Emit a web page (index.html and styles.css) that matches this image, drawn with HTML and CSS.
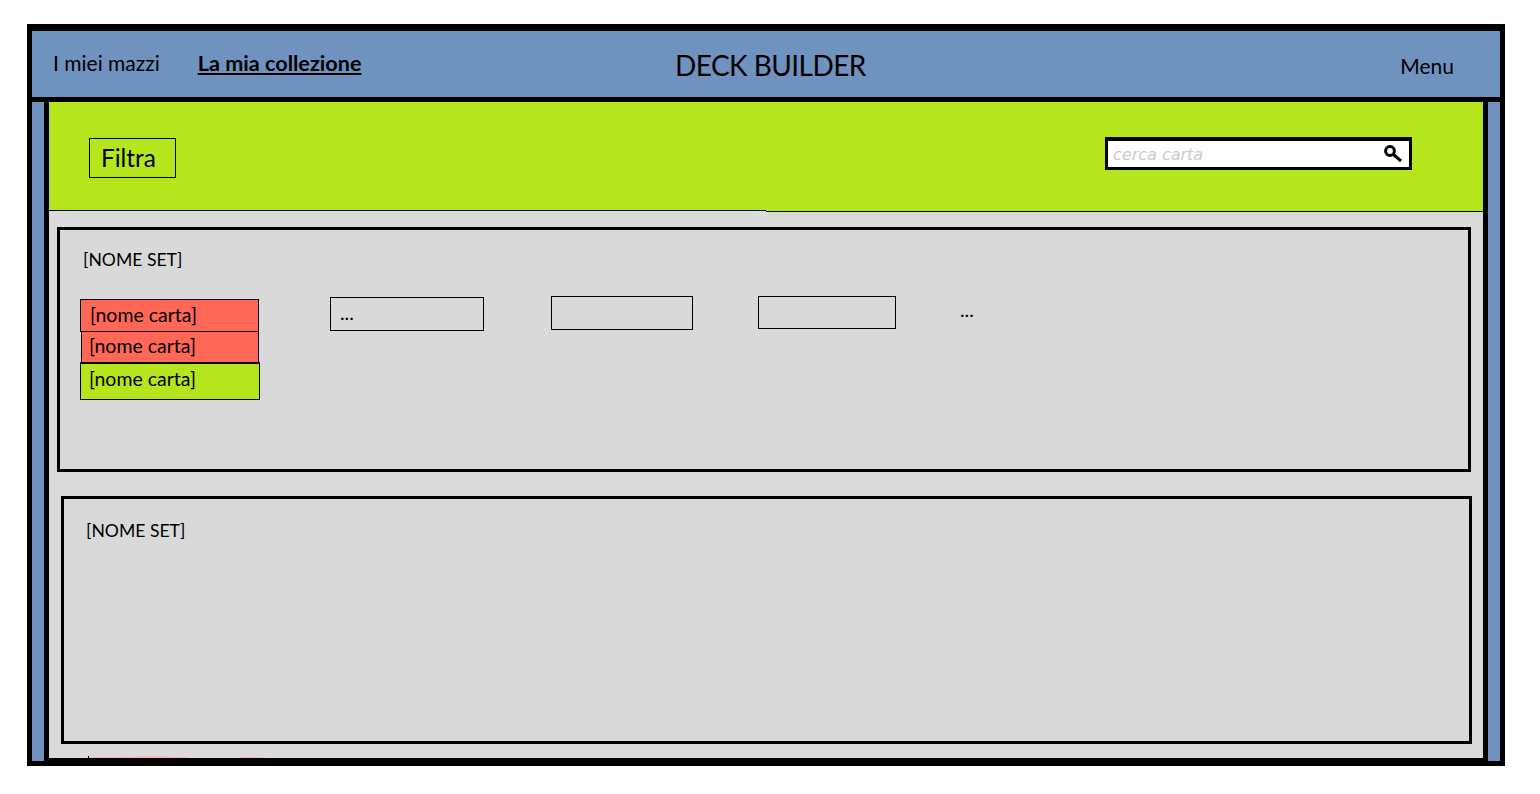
FILE: index.html
```html
<!DOCTYPE html>
<html lang="en">
<head>
  <meta charset="UTF-8">
  <meta name="viewport" content="width=device-width, initial-scale=1.0">
  <title>Deck Builder</title>
  <link rel="stylesheet" href="styles.css">
</head>
<body>
  <div class="frame">
    <header class="header">
      <nav class="nav">
        <a class="nav-link">I miei mazzi</a>
        <a class="nav-link current">La mia collezione</a>
      </nav>
      <h1 class="title">DECK BUILDER</h1>
      <a class="menu">Menu</a>
    </header>
    <main class="main">
      <div class="toolbar">
        <button class="filter">Filtra</button>
        <div class="search">
          <span class="search-text">cerca carta</span>
          <svg class="search-icon" width="20" height="20" viewBox="0 0 20 20">
            <circle cx="7" cy="7" r="4.4" fill="none" stroke="#000" stroke-width="3"/>
            <path d="M10.5 10.5 L18 17" stroke="#000" stroke-width="3" fill="none"/>
          </svg>
        </div>
      </div>

      <section class="set set-first">
        <h2 class="set-name">[NOME SET]</h2>
        <div class="cards">
          <div class="stack">
            <div class="card red red-top">[nome carta]</div>
            <div class="card red red-mid">[nome carta]</div>
            <div class="card lime">[nome carta]</div>
          </div>
          <div class="slot slot-a">...</div>
          <div class="slot slot-b"></div>
          <div class="slot slot-c"></div>
          <div class="more">...</div>
        </div>
      </section>

      <section class="set set-second">
        <h2 class="set-name">[NOME SET]</h2>
      </section>

      <div class="cutoff">
        <span class="tick"></span>
        <span class="pink pink-a"></span>
        <span class="pink pink-b"></span>
        <span class="pink pink-c"></span>
        <span class="pink pink-d"></span>
      </div>
    </main>
  </div>
</body>
</html>
```

FILE: styles.css
```css
body {
  margin: 0;
  background: #fff;
  font-family: 'Lato', 'Liberation Sans', sans-serif;
  color: #000;
}
.frame {
  box-sizing: border-box;
  width: 1478px;
  height: 742px;
  margin: 24px 0 0 27px;
  border: 5px solid #000;
  border-top-width: 7px;
  background: #6f92bf;
  display: flex;
  flex-direction: column;
}

/* Header */
.header {
  box-sizing: border-box;
  height: 71px;
  flex-shrink: 0;
  border-bottom: 5px solid #000;
  padding-left: 21px;
  display: flex;
  align-items: flex-start;
}
.nav {
  width: 622px;
  flex-shrink: 0;
  display: flex;
  gap: 38px;
  padding-top: 19px;
  font-size: 21px;
}
.nav-link {
  line-height: 26px;
}
.nav-link.current {
  font-size: 21.6px;
  font-weight: 700;
  text-decoration: underline;
}
.title {
  margin: 0;
  padding-top: 15px;
  font-size: 28px;
  font-weight: 400;
  letter-spacing: -0.55px;
  line-height: 38px;
}
.menu {
  margin-left: auto;
  margin-right: 46px;
  padding-top: 22px;
  font-size: 21px;
  line-height: 26px;
}

/* Main column */
.main {
  flex: 1;
  min-height: 0;
  margin: 0 12px;
  border: 5px solid #000;
  border-width: 0 5px 3px;
  background: #d9dad9;
}
.toolbar {
  box-sizing: border-box;
  height: 110px;
  position: relative;
  border-bottom: 1px solid #000;
  background: #b5e61d;
  padding: 36px 71px 0 40px;
  display: flex;
  justify-content: space-between;
  align-items: flex-start;
}
.toolbar::after {
  content: "";
  position: absolute;
  left: 0;
  bottom: -1px;
  width: 717px;
  height: 1px;
  border-top: 1px solid #000;
  background: #d9dad9;
}
.filter {
  box-sizing: border-box;
  width: 87px;
  height: 40px;
  padding: 0 0 2px 11px;
  border: 1px solid #000;
  background: none;
  font-family: inherit;
  font-size: 24.4px;
  text-align: left;
  color: #000;
}
.search {
  box-sizing: border-box;
  width: 307px;
  height: 33px;
  margin-top: -1px;
  border: 3px solid #000;
  border-top-width: 4px;
  background: #fff;
  padding: 0 6px 0 5px;
  display: flex;
  justify-content: space-between;
  align-items: center;
}
.search-text {
  font-family: 'DejaVu Sans', sans-serif;
  font-size: 16px;
  font-style: italic;
  color: #cccccc;
}

/* Set panels */
.set {
  box-sizing: border-box;
  border: 3px solid #000;
  background: #d9d9d9;
}
.set-first {
  width: 1414px;
  height: 245px;
  margin: 15px 0 0 8px;
  padding: 18px 0 0 23px;
}
.set-second {
  width: 1411px;
  height: 248px;
  margin: 24px 0 0 12px;
  padding: 20px 0 0 22px;
}
.set-name {
  margin: 0;
  font-size: 17.6px;
  font-weight: 400;
  line-height: 24px;
}
.cards {
  display: flex;
  align-items: flex-start;
  margin: 24px 0 0 -3px;
}
.stack {
  width: 180px;
  margin-top: 3px;
  flex-shrink: 0;
}
.card {
  box-sizing: border-box;
  border: 1px solid #000;
  font-size: 19.5px;
  line-height: 24px;
}
.red {
  background: #ff6757;
}
.red-top {
  width: 179px;
  height: 33px;
  padding: 3px 0 0 9px;
}
.red-mid {
  width: 178px;
  height: 32px;
  margin: -1px 0 0 1px;
  padding: 2px 0 0 7px;
}
.lime {
  height: 38px;
  margin-top: -1px;
  border-top-width: 2px;
  padding: 3px 0 0 8px;
  background: #b5e61d;
}
.slot {
  box-sizing: border-box;
  flex-shrink: 0;
  border: 1px solid #000;
  font-size: 19.5px;
  line-height: 24px;
}
.slot-a {
  width: 154px;
  height: 34px;
  margin: 1px 0 0 70px;
  padding: 3px 0 0 9px;
}
.slot-b {
  width: 142px;
  height: 34px;
  margin-left: 67px;
}
.slot-c {
  width: 138px;
  height: 33px;
  margin-left: 65px;
}
.more {
  margin: 2px 0 0 64px;
  font-size: 19.5px;
  line-height: 24px;
}

/* Third panel cut off by the frame */
.cutoff {
  display: flex;
  align-items: flex-end;
  height: 2px;
  margin: 12px 0 0 39px;
}
.tick {
  width: 1px;
  height: 2px;
  background: #000;
}
.pink {
  height: 1px;
  background: #ffaec9;
}
.pink-a {
  width: 48px;
}
.pink-b {
  width: 32px;
  height: 2px;
}
.pink-c {
  width: 18px;
}
.pink-d {
  width: 23px;
  margin-left: 53px;
}
```
